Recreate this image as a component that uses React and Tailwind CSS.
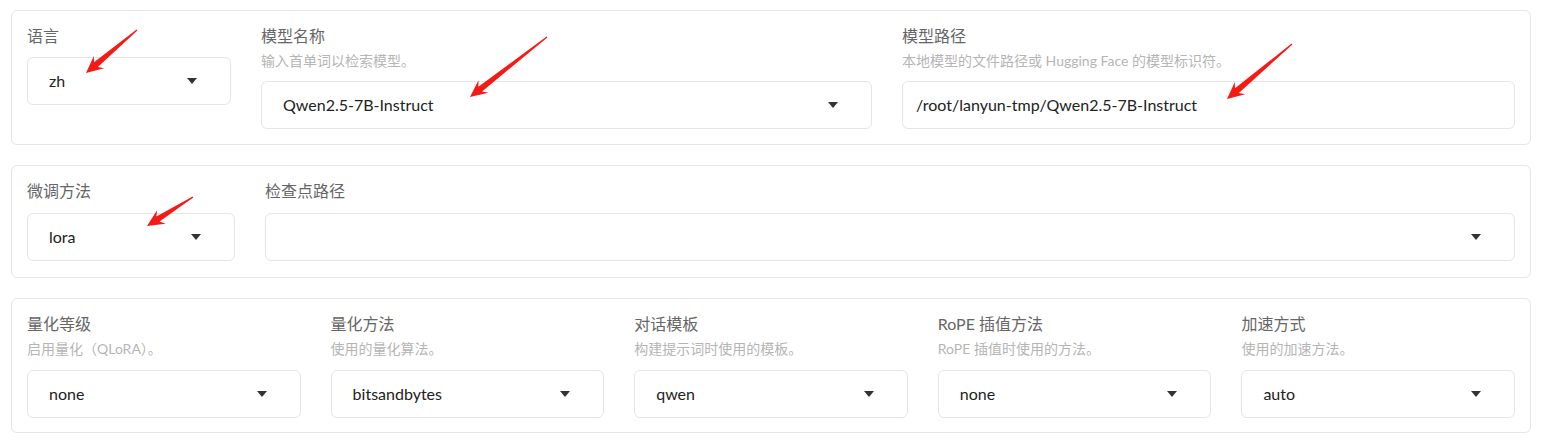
import React from "react";

const FONT = { fontFamily: 'Lato, "Noto Sans CJK SC", sans-serif' };

function Triangle() {
  return (
    <svg width="10" height="6" viewBox="0 0 10 6" className="shrink-0">
      <path d="M0 0 H10 L5 6 Z" fill="#333" />
    </svg>
  );
}

function Select({ value, className = "" }) {
  return (
    <div
      className={`h-[48px] flex items-center justify-between pl-[21px] pr-[33px] border border-[#e5e5e5] rounded-[6px] bg-white text-[16px] text-[#222] ${className}`}
    >
      <span>{value}</span>
      <Triangle />
    </div>
  );
}

function Field({ label, desc, value, className = "", textbox, gapClass = "mt-[10px]" }) {
  return (
    <div className={`flex flex-col ${className}`}>
      <div className="h-[20px] leading-[20px] text-[16px] text-[#666]">{label}</div>
      {desc ? (
        <>
          <div className="mt-[5px] h-[20px] leading-[20px] text-[14px] text-[#b5b5b5]">{desc}</div>
          {textbox ? (
            <div className={`${gapClass} h-[48px] flex items-center pl-[13px] border border-[#e5e5e5] rounded-[6px] bg-white text-[16px] text-[#222]`}>
              {value}
            </div>
          ) : (
            <Select value={value} className={gapClass} />
          )}
        </>
      ) : (
        <Select value={value} className={gapClass} />
      )}
    </div>
  );
}

function Arrow({ tail, tip }) {
  const dx = tail[0] - tip[0];
  const dy = tail[1] - tip[1];
  const len = Math.hypot(dx, dy);
  const ux = dx / len;
  const uy = dy / len;
  const nx = -uy;
  const ny = ux;
  const H = 17;
  const W = 8;
  const w1 = 3;
  const w0 = 0.6;
  const p = (bx, by, a, b) => `${bx + ux * a + nx * b},${by + uy * a + ny * b}`;
  const pts = [
    p(tip[0], tip[1], 0, 0),
    p(tip[0], tip[1], H, W),
    p(tip[0], tip[1], H - 4, w1),
    p(tail[0], tail[1], 0, w0),
    p(tail[0], tail[1], 0, -w0),
    p(tip[0], tip[1], H - 4, -w1),
    p(tip[0], tip[1], H, -W),
  ].join(" ");
  return <polygon points={pts} fill="#f51a14" />;
}

export default function App() {
  return (
    <div className="relative w-[1547px] h-[446px] bg-white overflow-hidden" style={FONT}>
      <div className="flex flex-col gap-[20px] pt-[10px] pl-[11px] w-[1531px]">
        {/* Panel 1 */}
        <div className="border border-[#e5e5e5] rounded-[6px] px-[15px] pt-[15px] pb-[15px] flex gap-[30px]">
          <Field label="语言" value="zh" className="w-[204px]" gapClass="mt-[11px]" />
          <Field
            label="模型名称"
            desc="输入首单词以检索模型。"
            value="Qwen2.5-7B-Instruct"
            className="w-[611px]"
          />
          <Field
            label="模型路径"
            desc="本地模型的文件路径或 Hugging Face 的模型标识符。"
            value="/root/lanyun-tmp/Qwen2.5-7B-Instruct"
            className="flex-1"
            textbox
          />
        </div>

        {/* Panel 2 */}
        <div className="border border-[#e5e5e5] rounded-[6px] px-[15px] pt-[15px] pb-[16px] flex gap-[30px]">
          <Field label="微调方法" value="lora" className="w-[208px]" gapClass="mt-[12px]" />
          <Field label="检查点路径" value="" className="flex-1" gapClass="mt-[12px]" />
        </div>

        {/* Panel 3 */}
        <div className="border border-[#e5e5e5] rounded-[6px] px-[15px] pt-[15px] pb-[14px] grid grid-cols-5 gap-[30px]">
          <Field label="量化等级" desc="启用量化（QLoRA）。" value="none" gapClass="mt-[11px]" />
          <Field label="量化方法" desc="使用的量化算法。" value="bitsandbytes" gapClass="mt-[11px]" />
          <Field label="对话模板" desc="构建提示词时使用的模板。" value="qwen" gapClass="mt-[11px]" />
          <Field label="RoPE 插值方法" desc="RoPE 插值时使用的方法。" value="none" gapClass="mt-[11px]" />
          <Field label="加速方式" desc="使用的加速方法。" value="auto" gapClass="mt-[11px]" />
        </div>
      </div>

      <svg
        className="absolute left-0 top-0 pointer-events-none"
        width="1547"
        height="446"
        viewBox="0 0 1547 446"
      >
        <Arrow tail={[137, 30]} tip={[86, 73]} />
        <Arrow tail={[547, 37]} tip={[470, 97]} />
        <Arrow tail={[1292, 44]} tip={[1227, 99]} />
        <Arrow tail={[193, 197]} tip={[147, 226]} />
      </svg>
    </div>
  );
}
